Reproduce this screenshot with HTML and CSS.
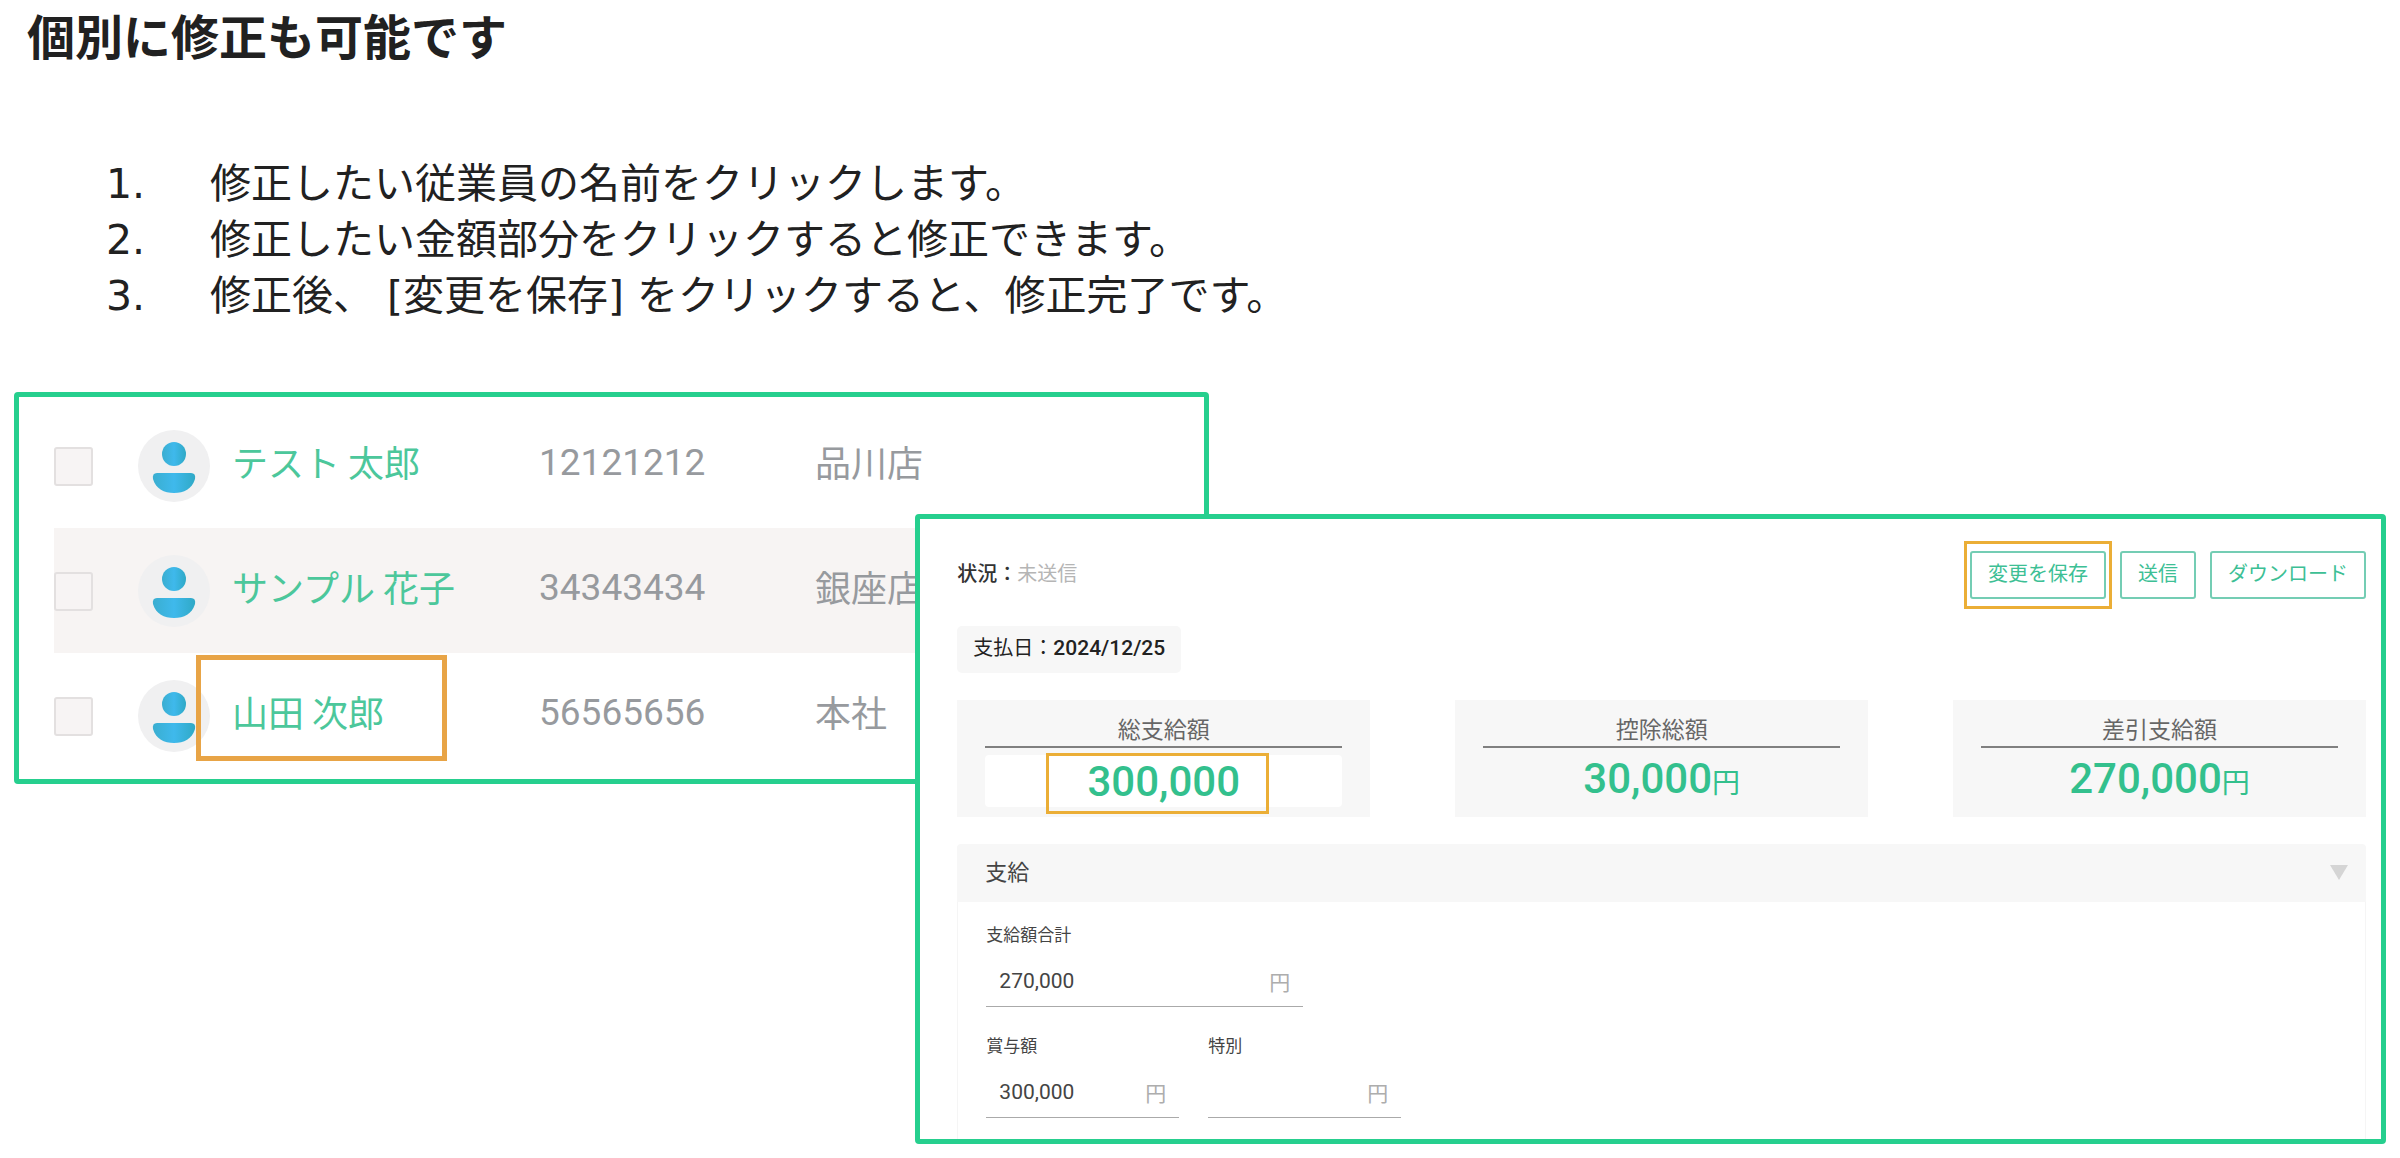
FILE: index.html
```html
<!DOCTYPE html>
<html lang="ja">
<head>
  <meta charset="UTF-8" />
  <meta name="viewport" content="width=device-width, initial-scale=1.0" />
  <title>個別に修正も可能です</title>
  <link rel="stylesheet" href="styles.css">
</head>
<body>
  <svg class="defs" aria-hidden="true">
    <defs>
      <linearGradient id="blue" x1="0" y1="0" x2="1" y2="0">
        <stop offset="0" stop-color="#3aaed0" />
        <stop offset="0.5" stop-color="#3fb9ec" />
        <stop offset="1" stop-color="#2fa9c6" />
      </linearGradient>
      <symbol id="avatar" viewBox="0 0 74 74">
        <circle cx="37" cy="37" r="36" fill="#f0f0f1" />
        <circle cx="37" cy="25" r="12" fill="url(#blue)" />
        <path d="M20 44H54Q59 44 58 50C55 60 47 64 37 64S19 60 16 50Q15 44 20 44Z" fill="url(#blue)" />
      </symbol>
    </defs>
  </svg>

  <h1>個別に修正も可能です</h1>

  <ol class="steps">
    <li>修正したい従業員の名前をクリックします。</li>
    <li>修正したい金額部分をクリックすると修正できます。</li>
    <li>修正後、 [変更を保存] をクリックすると、修正完了です。</li>
  </ol>

  <main class="stage">
    <section class="panel employees">
      <table>
        <tbody>
          <tr>
            <td class="col-check"><input type="checkbox" aria-label="テスト 太郎"></td>
            <td class="col-avatar"><svg class="avatar"><use href="#avatar" /></svg></td>
            <td class="col-name"><a href="#">テスト 太郎</a></td>
            <td class="col-code">12121212</td>
            <td>品川店</td>
          </tr>
          <tr class="striped">
            <td class="col-check"><input type="checkbox" aria-label="サンプル 花子"></td>
            <td class="col-avatar"><svg class="avatar"><use href="#avatar" /></svg></td>
            <td class="col-name"><a href="#">サンプル 花子</a></td>
            <td class="col-code">34343434</td>
            <td>銀座店</td>
          </tr>
          <tr>
            <td class="col-check"><input type="checkbox" aria-label="山田 次郎"></td>
            <td class="col-avatar"><svg class="avatar"><use href="#avatar" /></svg></td>
            <td class="col-name"><a href="#">山田 次郎</a><span class="mark mark-name"></span></td>
            <td class="col-code">56565656</td>
            <td>本社</td>
          </tr>
        </tbody>
      </table>
    </section>

    <section class="panel payslip">
      <div class="toolbar">
        <p class="status"><b>状況：</b>未送信</p>
        <div class="actions">
          <div class="marked"><button type="button">変更を保存</button><span class="mark mark-save"></span></div>
          <button type="button">送信</button>
          <button type="button">ダウンロード</button>
        </div>
      </div>

      <p class="paydate">支払日：<time datetime="2024-12-25">2024/12/25</time></p>

      <div class="cards">
        <div class="card">
          <label for="gross" class="card-title">総支給額</label>
          <div class="marked">
            <input type="text" id="gross" class="gross" value="300,000">
            <span class="mark mark-gross"></span>
          </div>
        </div>
        <div class="card">
          <div class="card-title">控除総額</div>
          <div class="amount">30,000<small>円</small></div>
        </div>
        <div class="card">
          <div class="card-title">差引支給額</div>
          <div class="amount">270,000<small>円</small></div>
        </div>
      </div>

      <div class="section">
        <div class="section-head">
          <h2>支給</h2>
          <svg class="caret" viewBox="0 0 18 15"><path d="M0 0H18L9 15Z" fill="#d5d5d5" /></svg>
        </div>
        <div class="fields">
          <div class="field wide">
            <label for="total">支給額合計</label>
            <div class="box"><input type="text" id="total" value="270,000"><span>円</span></div>
          </div>
          <div class="field-row">
            <div class="field">
              <label for="bonus">賞与額</label>
              <div class="box"><input type="text" id="bonus" value="300,000"><span>円</span></div>
            </div>
            <div class="field">
              <label for="special">特別</label>
              <div class="box"><input type="text" id="special" value=""><span>円</span></div>
            </div>
          </div>
        </div>
      </div>
    </section>
  </main>
</body>
</html>
```
FILE: styles.css
```css
* {
  box-sizing: border-box;
}
body {
  margin: 0;
  background-color: #ffffff;
  color: #212121;
  font-family: "Noto Sans CJK JP", sans-serif;
}
.defs {
  position: absolute;
  width: 0;
  height: 0;
}
h1 {
  margin: 0;
  padding: 0 27px;
  font-size: 48px;
  line-height: 68px;
}
.steps {
  margin: 88px 0 68px;
  padding: 0 106px;
  list-style: none;
  counter-reset: step;
  font-family: "DejaVu Sans", "Noto Sans CJK JP", sans-serif;
  font-size: 41px;
  line-height: 56px;
}
.steps li {
  display: flex;
  counter-increment: step;
}
.steps li::before {
  content: counter(step) ".";
  flex: 0 0 104px;
}

/* panels, the second one overlaps the first */
.stage {
  display: grid;
  grid-template-columns: 38% 12.4% 1fr;
  grid-template-rows: 122px 270px auto;
  padding: 0 14px 14px;
}
.panel {
  border: 5px solid #26cf8e;
  border-radius: 4px;
  background-color: #ffffff;
}
.employees {
  grid-column: 1 / 3;
  grid-row: 1 / 3;
  padding: 6px 0 0 35px;
}
.payslip {
  grid-column: 2 / 4;
  grid-row: 2 / 4;
  z-index: 1;
  padding: 32px 15px 0 37px;
}

/* orange frames */
.marked {
  position: relative;
}
.mark {
  position: absolute;
  border: 3px solid #ebae36;
  pointer-events: none;
}
.mark-name {
  inset: 2px 92px 17px -36px;
  border: 5px solid #e8a446;
}
.mark-save {
  inset: -10px -6px;
}
.mark-gross {
  inset: -2px 73px -7px 61px;
}

/* employee list */
table {
  width: 100%;
  table-layout: fixed;
  border-collapse: collapse;
  color: #979a9e;
  font-size: 36px;
  line-height: 48px;
}
td {
  height: 125px;
  padding: 0 0 10px;
  white-space: nowrap;
}
.striped {
  background-color: #f7f4f3;
}
.col-check {
  width: 83px;
  padding: 2px 0 0;
}
.col-avatar {
  width: 95px;
  padding: 0;
}
.col-name {
  position: relative;
  width: 307px;
}
.col-code {
  width: 276px;
  padding-bottom: 6px;
  font-family: Roboto, sans-serif;
  font-size: 37px;
}
.col-name a {
  color: #4cc79b;
  text-decoration: none;
}
input[type="checkbox"] {
  display: block;
  appearance: none;
  width: 39px;
  height: 39px;
  margin: 0;
  border: 2px solid #e3e0e0;
  border-radius: 3px;
  background-color: #f7f4f4;
}
.avatar {
  display: block;
  width: 74px;
  height: 74px;
}

/* payslip */
.toolbar {
  display: flex;
  justify-content: space-between;
  align-items: flex-start;
}
.status {
  margin: 0;
  padding-top: 7px;
  color: #b5b5b5;
  font-size: 20px;
  line-height: 30px;
}
.status b {
  color: #333333;
  font-weight: 500;
}
.actions {
  display: flex;
  gap: 14px;
}
.actions button {
  height: 48px;
  padding: 0 16px 6px;
  border: 2px solid #74cdb4;
  border-radius: 3px;
  background-color: #ffffff;
  color: #3dbf95;
  font: 20px "Noto Sans CJK JP", sans-serif;
  cursor: pointer;
}
.paydate {
  width: fit-content;
  margin: 27px 0;
  padding: 6px 16px 10px;
  border-radius: 5px;
  background-color: #f7f7f7;
  color: #222222;
  font-size: 20px;
  line-height: 30px;
}
.paydate time {
  font-family: Roboto, sans-serif;
  font-size: 21px;
  font-weight: 500;
}
.cards {
  display: grid;
  grid-template-columns: repeat(3, 1fr);
  gap: 85px;
}
.card {
  height: 117px;
  padding: 12px 28px 10px;
  background-color: #f7f7f7;
  text-align: center;
}
.card-title {
  display: block;
  height: 36px;
  margin-bottom: 7px;
  border-bottom: 2px solid #808080;
  color: #666666;
  font-size: 23px;
  line-height: 32px;
}
.gross,
.amount {
  color: #33c08d;
  font-family: Roboto, "Noto Sans CJK JP", sans-serif;
  font-size: 42px;
  font-weight: 500;
  line-height: 48px;
}
.gross {
  display: block;
  width: 100%;
  height: 52px;
  padding: 0;
  border: none;
  border-radius: 4px;
  background-color: #ffffff;
  text-align: center;
}
.amount small {
  font-size: 28px;
  font-weight: 400;
  line-height: 28px;
}
.section {
  margin-top: 27px;
}
.section-head {
  display: flex;
  justify-content: space-between;
  align-items: center;
  height: 58px;
  padding: 0 18px 2px 28px;
  border-radius: 4px 4px 0 0;
  background-color: #f7f7f7;
}
.section-head h2 {
  margin: 0;
  padding-bottom: 4px;
  color: #444444;
  font-size: 22px;
  font-weight: 400;
  line-height: 28px;
}
.caret {
  width: 18px;
  height: 15px;
}
.fields {
  padding: 20px 28px 21px;
  border: solid #f5f5f5;
  border-width: 0 1px;
}
.field-row {
  display: flex;
  gap: 29px;
  margin-top: 26px;
}
.field {
  width: 193px;
}
.field.wide {
  width: 317px;
}
.field label {
  display: block;
  height: 25px;
  color: #444444;
  font-size: 17px;
  line-height: 24px;
}
.box {
  display: flex;
  align-items: center;
  height: 60px;
  padding: 8px 13px 0;
  border-bottom: 1px solid #aaaaaa;
}
.box input {
  flex: 1;
  min-width: 0;
  height: 40px;
  padding: 0;
  border: none;
  background-color: transparent;
  color: #444444;
  font: 21px Roboto, sans-serif;
}
.box span {
  color: #adadad;
  font-size: 21px;
  line-height: 36px;
}
```
